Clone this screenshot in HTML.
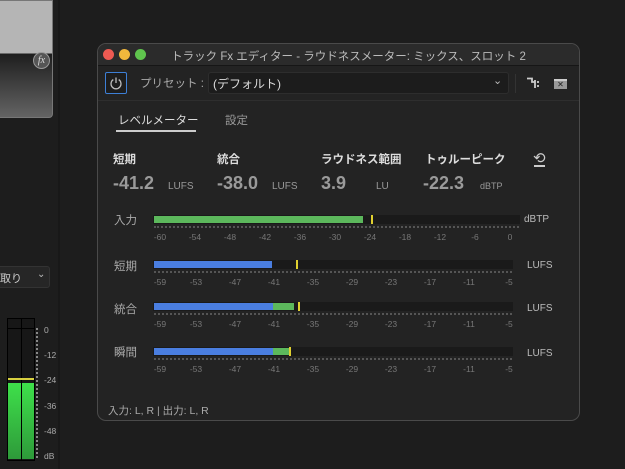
<!DOCTYPE html>
<html><head><meta charset="utf-8"><style>
*{margin:0;padding:0;box-sizing:border-box}
html,body{width:625px;height:469px}
body{background:#1d1d1d;font-family:"Liberation Sans","Noto Sans CJK JP",sans-serif;position:relative;overflow:hidden;color:#ccc}
.a{position:absolute}
.win{left:97px;top:43px;width:483px;height:378px;border:1px solid #4a4a4a;border-radius:9px;background:#232323;overflow:hidden}
.tb{left:0;top:0;width:100%;height:22px;background:#2b2b2b;border-bottom:1px solid #161616}
.dot{width:11px;height:11px;border-radius:50%;top:5px}
.t{font-size:11.5px;white-space:nowrap}
.track{background:#1a1a1a;height:9px}
.sl{font-size:8.5px;color:#777;top:0;transform:translateX(-50%)}
</style></head><body>
<!-- left panel -->
<div class="a" style="left:0;top:0;width:53px;height:118px;border:1px solid #777;border-left:none;border-radius:0 0 4px 0;background:linear-gradient(#b5b5b5 0 52px,#1e1e1e 53px,#666 118px)"></div>
<div class="a" style="left:33px;top:52px;width:17px;height:17px;border-radius:50%;background:#555;border:1px solid #999;color:#ddd;font-size:10px;font-style:italic;text-align:center;line-height:15px;font-family:'Liberation Serif',serif">fx</div>
<div class="a" style="left:58px;top:0;width:2px;height:469px;background:#181818"></div>
<div class="a" style="left:-4px;top:266px;width:54px;height:22px;background:#262626;border:1px solid #333;border-radius:3px"></div>
<div class="a t" style="left:0;top:270px;font-size:11px;color:#ccc">取り</div>
<div class="a" style="left:37px;top:269px;font-size:10px;color:#bbb">⌄</div>
<div class="a" style="left:7px;top:318px;width:28px;height:143px;background:#171717;border:1px solid #000"></div>
<div class="a" style="left:8px;top:328px;width:26px;height:1px;background:#000"></div>
<div class="a" style="left:21px;top:319px;width:1px;height:141px;background:#000"></div>
<div class="a" style="left:8px;top:378px;width:26px;height:2px;background:#d8d040"></div>
<div class="a" style="left:8px;top:383px;width:13px;height:76px;background:linear-gradient(#3ee04a,#2e9a3a)"></div>
<div class="a" style="left:22px;top:383px;width:12px;height:76px;background:linear-gradient(#3ee04a,#2e9a3a)"></div>
<div class="a" style="left:36px;top:328px;width:2px;height:130px;border-left:2px dotted #888"></div>
<div class="a" style="left:44px;top:318px;font-size:8.5px;color:#aaa;line-height:25.2px">0<br>-12<br>-24<br>-36<br>-48<br>dB</div>

<div class="a win">
 <div class="a tb"></div>
 <div class="a dot" style="left:5px;background:#ee5a52"></div>
 <div class="a dot" style="left:21px;background:#f2b83c"></div>
 <div class="a dot" style="left:37px;background:#5fc44d"></div>
 <div class="a t" style="left:0;width:100%;text-align:center;top:4px;font-size:11.5px;color:#bbb;padding-left:20px">トラック Fx エディター - ラウドネスメーター: ミックス、スロット 2</div>
 <!-- toolbar -->
 <div class="a" style="left:7px;top:28px;width:22px;height:22px;border:1px solid #3d7fd6;border-radius:2px;background:#1d1d1d"></div>
 <svg class="a" style="left:11px;top:32px" width="14" height="14" viewBox="0 0 14 14"><path d="M4.3 3.6A5 5 0 1 0 9.7 3.6" fill="none" stroke="#bbb" stroke-width="1.3"/><path d="M7 1.5V7" stroke="#bbb" stroke-width="1.3"/></svg>
 <div class="a t" style="left:42px;top:31px;color:#aaa">プリセット :</div>
 <div class="a" style="left:110px;top:28px;width:301px;height:22px;background:#1c1c1c;border:1px solid #2d2d2d;border-radius:3px"></div>
 <div class="a t" style="left:115px;top:31px;font-size:12px;color:#ddd">(デフォルト)</div>
 <div class="a" style="left:395px;top:30px;font-size:11px;color:#bbb">⌄</div>
 <div class="a" style="left:417px;top:30px;width:1px;height:19px;background:#333"></div>
 <svg class="a" style="left:428px;top:33px" width="14" height="12"><path d="M1 1.5H6V5H9M9 3V11M12 4V6M12 8V10" stroke="#ccc" stroke-width="1.8" fill="none"/></svg>
 <div class="a" style="left:456px;top:35px;width:13px;height:10px;background:#999;border-top:2px solid #ccc;color:#222;font-size:8px;text-align:center;line-height:8px">✕</div>
 <div class="a" style="left:0;top:56px;width:100%;height:1px;background:#2e2e2e"></div>
 <!-- tabs -->
 <div class="a t" style="left:20px;top:68px;font-size:11.5px;color:#ddd">レベルメーター</div>
 <div class="a" style="left:18px;top:86px;width:80px;height:2px;background:#ccc"></div>
 <div class="a t" style="left:127px;top:68px;color:#999">設定</div>
 <!-- stats -->
 <div class="a t" style="left:15px;top:107px;font-weight:bold;color:#ddd">短期</div>
 <div class="a t" style="left:119px;top:107px;font-weight:bold;color:#ddd">統合</div>
 <div class="a t" style="left:223px;top:107px;font-weight:bold;color:#ddd">ラウドネス範囲</div>
 <div class="a t" style="left:327px;top:107px;font-weight:bold;color:#ddd">トゥルーピーク</div>
 <div class="a" style="left:435px;top:105px;font-size:15px;color:#ccc">⟲</div>
 <div class="a" style="left:436px;top:121px;width:11px;height:2px;background:#ccc"></div>
 <div class="a t" style="left:15px;top:129px;font-size:18px;font-weight:bold;color:#9a9a9a">-41.2</div>
 <div class="a t" style="left:70px;top:137px;font-size:10px;color:#999">LUFS</div>
 <div class="a t" style="left:119px;top:129px;font-size:18px;font-weight:bold;color:#9a9a9a">-38.0</div>
 <div class="a t" style="left:174px;top:137px;font-size:10px;color:#999">LUFS</div>
 <div class="a t" style="left:223px;top:129px;font-size:18px;font-weight:bold;color:#9a9a9a">3.9</div>
 <div class="a t" style="left:278px;top:137px;font-size:10px;color:#999">LU</div>
 <div class="a t" style="left:325px;top:129px;font-size:18px;font-weight:bold;color:#9a9a9a">-22.3</div>
 <div class="a t" style="left:382px;top:137px;font-size:9px;color:#999">dBTP</div>
 <!-- meters -->
 <div class="a t" style="left:16px;top:168px;color:#aaa">入力</div>
 <div class="a track" style="left:55px;top:171px;width:367px"></div>
 <div class="a" style="left:56px;top:172px;width:209px;height:7px;background:#5cb85c"></div>
 <div class="a" style="left:273px;top:171px;width:2px;height:9px;background:#e0d030"></div>
 <div class="a" style="left:56px;top:182px;width:365px;border-top:2px dotted #555"></div>
 <div class="a t" style="left:426px;top:170px;font-size:10px;color:#bbb">dBTP</div>
 <div class="a" style="left:0;top:188px;width:100%;height:12px">
  <span class="a sl" style="left:62px">-60</span><span class="a sl" style="left:97px">-54</span><span class="a sl" style="left:132px">-48</span><span class="a sl" style="left:167px">-42</span><span class="a sl" style="left:202px">-36</span><span class="a sl" style="left:237px">-30</span><span class="a sl" style="left:272px">-24</span><span class="a sl" style="left:307px">-18</span><span class="a sl" style="left:342px">-12</span><span class="a sl" style="left:377px">-6</span><span class="a sl" style="left:412px">0</span>
 </div>

 <div class="a t" style="left:16px;top:214px;color:#aaa">短期</div>
 <div class="a track" style="left:55px;top:216px;width:360px"></div>
 <div class="a" style="left:56px;top:217px;width:118px;height:7px;background:#4a7ee0"></div>
 <div class="a" style="left:198px;top:216px;width:2px;height:9px;background:#e0d030"></div>
 <div class="a" style="left:56px;top:227px;width:358px;border-top:2px dotted #555"></div>
 <div class="a t" style="left:429px;top:216px;font-size:10px;color:#bbb">LUFS</div>

 <div class="a t" style="left:16px;top:257px;color:#aaa">統合</div>
 <div class="a track" style="left:55px;top:258px;width:360px"></div>
 <div class="a" style="left:56px;top:259px;width:119px;height:7px;background:#4a7ee0"></div>
 <div class="a" style="left:175px;top:259px;width:21px;height:7px;background:#5cb85c"></div>
 <div class="a" style="left:200px;top:258px;width:2px;height:9px;background:#e0d030"></div>
 <div class="a" style="left:56px;top:269px;width:358px;border-top:2px dotted #555"></div>
 <div class="a t" style="left:429px;top:259px;font-size:10px;color:#bbb">LUFS</div>

 <div class="a t" style="left:16px;top:300px;color:#aaa">瞬間</div>
 <div class="a track" style="left:55px;top:303px;width:360px"></div>
 <div class="a" style="left:56px;top:304px;width:119px;height:7px;background:#4a7ee0"></div>
 <div class="a" style="left:175px;top:304px;width:16px;height:7px;background:#5cb85c"></div>
 <div class="a" style="left:191px;top:303px;width:2px;height:9px;background:#e0d030"></div>
 <div class="a" style="left:56px;top:314px;width:358px;border-top:2px dotted #555"></div>
 <div class="a t" style="left:429px;top:304px;font-size:10px;color:#bbb">LUFS</div>

 <div class="a" style="left:0;top:233px;width:100%;height:12px"><span class="a sl" style="left:62px">-59</span><span class="a sl" style="left:98px">-53</span><span class="a sl" style="left:137px">-47</span><span class="a sl" style="left:176px">-41</span><span class="a sl" style="left:215px">-35</span><span class="a sl" style="left:254px">-29</span><span class="a sl" style="left:293px">-23</span><span class="a sl" style="left:332px">-17</span><span class="a sl" style="left:371px">-11</span><span class="a sl" style="left:411px">-5</span></div>
 <div class="a" style="left:0;top:275px;width:100%;height:12px"><span class="a sl" style="left:62px">-59</span><span class="a sl" style="left:98px">-53</span><span class="a sl" style="left:137px">-47</span><span class="a sl" style="left:176px">-41</span><span class="a sl" style="left:215px">-35</span><span class="a sl" style="left:254px">-29</span><span class="a sl" style="left:293px">-23</span><span class="a sl" style="left:332px">-17</span><span class="a sl" style="left:371px">-11</span><span class="a sl" style="left:411px">-5</span></div>
 <div class="a" style="left:0;top:320px;width:100%;height:12px"><span class="a sl" style="left:62px">-59</span><span class="a sl" style="left:98px">-53</span><span class="a sl" style="left:137px">-47</span><span class="a sl" style="left:176px">-41</span><span class="a sl" style="left:215px">-35</span><span class="a sl" style="left:254px">-29</span><span class="a sl" style="left:293px">-23</span><span class="a sl" style="left:332px">-17</span><span class="a sl" style="left:371px">-11</span><span class="a sl" style="left:411px">-5</span></div>

 <div class="a t" style="left:10px;top:359px;font-size:10.5px;color:#aaa">入力: L, R | 出力: L, R</div>
</div>
</body></html>
